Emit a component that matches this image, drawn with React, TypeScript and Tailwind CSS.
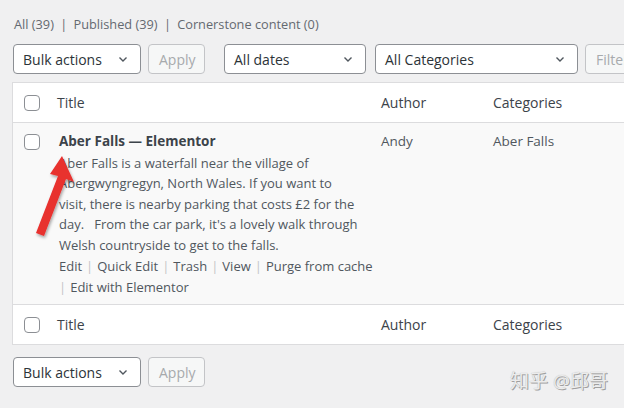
import React from 'react';

const font = { fontFamily: '"Open Sans", "Noto Sans CJK SC", sans-serif' };

const Chevron = () => (
  <svg width="14" height="14" viewBox="0 0 20 20" className="shrink-0">
    <path d="M5 8l5 5 5-5" fill="none" stroke="#50575e" strokeWidth="2" />
  </svg>
);

const Select: React.FC<{ label: string; className: string }> = ({ label, className }) => (
  <div
    className={`shrink-0 h-[30px] flex items-center justify-between pl-[9px] pr-[10px] bg-white border border-[#8c8f94] rounded-[4px] text-[14px] text-[#2c3338] ${className}`}
  >
    <span>{label}</span>
    <Chevron />
  </div>
);

const Btn: React.FC<{ label: string; className: string }> = ({ label, className }) => (
  <div
    className={`shrink-0 h-[30px] flex items-center pl-[10px] bg-[#f6f7f7] border border-[#c3c4c7] rounded-[4px] text-[14px] text-[#a7aaad] overflow-hidden ${className}`}
  >
    {label}
  </div>
);

const Checkbox = () => (
  <div className="w-4 h-4 border border-[#8c8f94] rounded-[4px] bg-white" />
);

const HeadRow = () => (
  <div className="grid grid-cols-[44px_324px_112px_1fr] h-[39px] items-center bg-white text-[14px] text-[#3c434a]">
    <div className="pl-[11px]"><Checkbox /></div>
    <div>Title</div>
    <div>Author</div>
    <div>Categories</div>
  </div>
);

const Sep = () => <span className="text-[#c3c4c7] px-[4px]">|</span>;

export default function App() {
  return (
    <div className="relative w-[624px] h-[408px] bg-[#f0f0f1] overflow-hidden" style={font}>
      <div className="pt-[14px] pl-[14px] text-[12.75px] text-[#646970] leading-[20px] whitespace-nowrap">
        All (39) <span className="px-[3px]">|</span> Published (39) <span className="px-[3px]">|</span> Cornerstone content (0)
      </div>

      <div className="flex items-center mt-[10px] pl-[13px] whitespace-nowrap">
        <Select label="Bulk actions" className="w-[128px]" />
        <Btn label="Apply" className="w-[57px] ml-[7px]" />
        <Select label="All dates" className="w-[142px] ml-[19px]" />
        <Select label="All Categories" className="w-[203px] ml-[9px]" />
        <Btn label="Filter" className="w-[60px] ml-[7px]" />
      </div>

      <div className="mt-[8px] ml-[12px] w-[640px] border border-[#dcdcde]">
        <div className="border-b border-[#dcdcde]">
          <HeadRow />
        </div>

        <div className="grid grid-cols-[44px_324px_112px_1fr] bg-[#f9f9f9] pt-[8px] pb-[7px] text-[13px] leading-[20.5px] text-[#50575e]">
          <div className="pl-[11px] pt-[3px]"><Checkbox /></div>
          <div className="pl-[2px]">
            <div className="font-bold text-[13.5px] text-[#3c434a]">Aber Falls — Elementor</div>
            <div className="mt-[1px] whitespace-pre">
              <div>Aber Falls is a waterfall near the village of</div>
              <div>Abergwyngregyn, North Wales. If you want to</div>
              <div>visit, there is nearby parking that costs £2 for the</div>
              <div>day.   From the car park, it's a lovely walk through</div>
              <div>Welsh countryside to get to the falls.</div>
            </div>
            <div className="mt-[1px] text-[#50575e] whitespace-nowrap">
              <div>
                Edit<Sep />Quick Edit<Sep />Trash<Sep />View<Sep />Purge from cache
              </div>
              <div>
                <span className="text-[#c3c4c7] pr-[4px]">|</span>Edit with Elementor
              </div>
            </div>
          </div>
          <div className="text-[13.5px]">Andy</div>
          <div className="text-[13.5px]">Aber Falls</div>
        </div>

        <div className="border-t border-[#dcdcde]">
          <HeadRow />
        </div>
      </div>

      <div className="flex items-center mt-[12px] pl-[13px]">
        <Select label="Bulk actions" className="w-[128px]" />
        <Btn label="Apply" className="w-[57px] ml-[7px]" />
      </div>

      <div
        className="absolute left-[510px] top-[367px] text-[19px] leading-[28px] text-[#ececec] whitespace-nowrap"
        style={{ textShadow: '1px 1px 0 #a0a0a0, 0 0 1px #b0b0b0' }}
      >
        知乎 @邱哥
      </div>

      <svg className="absolute left-[28px] top-[150px]" width="50" height="95" viewBox="0 0 50 95">
        <defs>
          <filter id="sh" x="-30%" y="-30%" width="160%" height="160%">
            <feDropShadow dx="1" dy="2" stdDeviation="1.5" floodColor="#000" floodOpacity="0.35" />
          </filter>
        </defs>
        <g filter="url(#sh)">
          <path d="M34 6 L46 32 L38 29 L16 86 L8 83 L30 26 L22 24 Z" fill="#e8302f" />
        </g>
      </svg>
    </div>
  );
}
